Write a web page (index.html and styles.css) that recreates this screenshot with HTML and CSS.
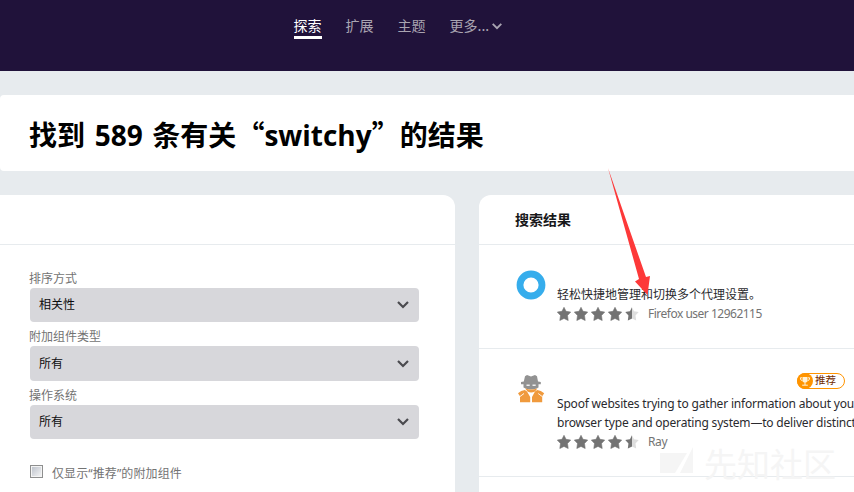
FILE: index.html
```html
<!DOCTYPE html>
<html lang="zh-CN">
<head>
<meta charset="utf-8">
<title>搜索结果</title>
<link rel="stylesheet" href="styles.css">
</head>
<body>
<svg width="0" height="0" class="defs">
  <defs>
    <path id="star" d="M7 .3 9 4.3 13.7 5.1 10.5 8.5 11.2 13.5 7 11.4 2.8 13.5 3.5 8.5 .3 5.1 5 4.3Z" stroke-width=".6" stroke-linejoin="round"/>
    <clipPath id="left-half"><rect width="7" height="14"/></clipPath>
    <symbol id="rating" viewBox="0 0 82 14">
      <g fill="#737373" stroke="#737373"><use href="#star"/><use href="#star" x="17"/><use href="#star" x="34"/><use href="#star" x="51"/></g>
      <g transform="translate(68)"><use href="#star" fill="#dedede"/><use href="#star" fill="#737373" clip-path="url(#left-half)"/></g>
    </symbol>
    <symbol id="chevron" viewBox="0 0 14 10"><path d="M2 2l5 5 5-5" fill="none" stroke="currentColor" stroke-width="2.2"/></symbol>
  </defs>
</svg>
<header class="header">
  <nav class="nav">
    <a class="nav-link active"><span>探索</span></a>
    <a class="nav-link">扩展</a>
    <a class="nav-link">主题</a>
    <a class="nav-link">更多...<svg class="nav-arrow"><use href="#chevron"/></svg></a>
  </nav>
</header>
<main class="page">
  <section class="title-card"><h1>找到 <span class="latin count">589</span> 条有关<span class="quote open">“</span><span class="latin">switchy</span><span class="quote close">”</span>的结果</h1></section>
  <div class="columns">
    <section class="card filters">
      <div class="card-head"></div>
      <form class="filter-body">
        <label>排序方式</label>
        <div class="select">相关性<svg><use href="#chevron"/></svg></div>
        <label>附加组件类型</label>
        <div class="select tall">所有<svg><use href="#chevron"/></svg></div>
        <label>操作系统</label>
        <div class="select">所有<svg><use href="#chevron"/></svg></div>
        <div class="check"><span class="box"></span><span>仅显示<i>“</i>推荐<i>”</i>的附加组件</span></div>
      </form>
    </section>
    <section class="card results">
      <div class="card-head">搜索结果</div>
      <article class="result first">
        <svg class="icon" viewBox="0 0 32 32"><circle cx="16" cy="16" r="11" fill="none" stroke="#36adec" stroke-width="6.8"/></svg>
        <div class="info">
          <p class="summary zh">轻松快捷地管理和切换多个代理设置。</p>
          <div class="meta"><svg class="stars"><use href="#rating"/></svg><span class="author user">Firefox user 12962115</span></div>
        </div>
      </article>
      <article class="result second">
        <svg class="icon" viewBox="0 0 32 32">
          <path fill="#929292" d="M10 3.2 12 2l4 1.4L20 2l2 1.2 1 5.3 2.8.5v2.2H6V9l2.8-.5Z"/>
          <path fill="#929292" d="M8.5 10.5h15v4q-3 2-7.5 2t-7.5-2Z"/>
          <path fill="#f09a3d" d="M10 15.2q6 2.5 12.5 0L20 18.4q-4 2-7.5 0Z"/>
          <path fill="#f09a3d" d="M9.8 17 12 18.5l3.2 5.5v5.2H5v-6l-2-3Q6 17.500 9.8 17ZM22.200 17 20 18.500 17 24v5.200h10.200v-6l2-3Q26 17.500 22.200 17Z"/>
          <path stroke="#eee" stroke-width="1.4" d="M11.500 12.300h3.200M17.500 12.300h3.200"/>
          <path d="M5 23.500 9 20.500M27.200 23.500l-4-3" stroke="#fff" stroke-width=".9"/>
        </svg>
        <div class="info">
          <div class="badge-row"><span class="badge"><svg viewBox="0 0 16 16"><circle cx="8" cy="8" r="8" fill="#ff9400"/><path d="M5.500 4h5v4Q10 9.500 8 9.500T5.500 8Z" fill="#fff2d8"/><path d="M8 9v3M5.200 12.200h5.600M5 4.800H3.300q0 2.700 2.200 3M11 4.800h1.700q0 2.700-2.200 3" fill="none" stroke="#fff2d8"/></svg>推荐</span></div>
          <p class="summary en"><span class="line one">Spoof websites trying to gather information about you</span><span class="line two">browser type and operating system—to deliver distinct</span></p>
          <div class="meta"><svg class="stars"><use href="#rating"/></svg><span class="author">Ray</span></div>
        </div>
      </article>
    </section>
  </div>
</main>
<div class="watermark"><svg viewBox="0 0 34 22"><path d="M0 1h27L15 21H0ZM33 -5v26H20Z" fill="#f5f5f5"/></svg><span>先知社区</span></div>
<svg class="pointer" viewBox="0 0 50 130"><path d="M3 1 41 110 45 109 42.500 128 30 114.500 34 112Z" fill="#fd3939"/></svg>
</body>
</html>
```
FILE: styles.css
```css
* { box-sizing: border-box; }
body {
  margin: 0;
  width: 854px;
  height: 492px;
  overflow: hidden;
  background: #e7ebee;
  font: 12px/18px "Noto Sans", "Noto Sans CJK SC", sans-serif;
  color: #2a2a2e;
}
.defs { position: absolute; }
.header { height: 71px; padding: 15px 0 0 293.5px; background: #20123a; }
.nav { display: flex; gap: 24px; }
.nav-link {
  height: 24px;
  color: #a9a4b1;
  font: 14px/20px "Noto Sans CJK SC", sans-serif;
  white-space: nowrap;
}
.active { color: #fff; border-bottom: 3px solid #fff; }
.nav-arrow { width: 12px; height: 9px; margin-left: 2px; }
.page { padding-top: 24px; }
.title-card { height: 76px; padding-left: 29px; background: #fff; border-radius: 4px 0 0 4px; }
h1 {
  margin: 0;
  font: bold 28px/78px "Noto Sans CJK SC", sans-serif;
  color: #000;
  white-space: nowrap;
  word-spacing: 3.3px;
}
.latin { font-family: "Open Sans", sans-serif; }
.quote { display: inline-block; width: 28px; }
.open { text-align: right; }
.columns { display: flex; gap: 24px; margin-top: 24px; height: 320px; }
.card { background: #fff; }
.filters { width: 455px; border-radius: 0 12px 0 0; }
.results { flex: 1; border-radius: 12px 0 0; min-width: 0; overflow: hidden; }
.card-head {
  height: 50px;
  padding-left: 36px;
  border-bottom: 1px solid #e7ebee;
  font: bold 14px/48px "Noto Sans CJK SC", sans-serif;
  color: #18181a;
}
.filter-body { padding: 25px 36px 0 30px; }
label { display: block; height: 18px; margin-left: -1px; line-height: 18px; color: #737373; }
.select {
  display: flex;
  align-items: center;
  justify-content: space-between;
  height: 34px;
  margin-bottom: 6px;
  padding: 0 9px;
  border-radius: 4px;
  background: #d7d7db;
  color: #0c0c0d;
}
.tall { height: 35px; }
.select svg { width: 14px; height: 10px; color: #4a4a4f; }
.check { display: flex; gap: 9px; padding-top: 20px; color: #737373; letter-spacing: .1px; }
.check i { font-style: normal; font-family: "Noto Sans", sans-serif; }
.box {
  width: 13px;
  height: 13px;
  border: 1px solid #8e8f8f;
  background: linear-gradient(135deg, #b9bfc9, #f7f7f7);
  box-shadow: inset 0 0 0 1px #f4f4f4;
}
.result { display: flex; padding-left: 36px; border-bottom: 1px solid #e7ebee; }
.icon { flex: none; width: 32px; height: 32px; }
.info { margin-left: 10px; white-space: nowrap; }
.summary { margin: 0; }
.first { height: 104px; padding-top: 24px; }
.first .info { padding-top: 17px; }
.second { height: 128px; padding-top: 24px; }
.badge-row { display: flex; height: 21px; padding-left: 240px; }
.badge {
  display: flex;
  gap: 2px;
  width: 48px;
  height: 16px;
  border: 1px solid #ff9400;
  border-radius: 8px;
  font-size: 10.5px;
  line-height: 13px;
  color: #712b00;
}
.badge svg { width: 16px; height: 16px; margin: -1px 0 0 -1px; }
.line { display: block; height: 19px; line-height: 19px; letter-spacing: -.19px; }
.meta { display: flex; height: 19px; line-height: 19px; }
.stars { width: 82px; height: 14px; margin-top: 3px; }
.author { margin-left: 9px; color: #737373; letter-spacing: -.4px; }
.user { letter-spacing: -.5px; }
.watermark {
  position: absolute;
  left: 660px;
  top: 449px;
  display: flex;
  align-items: center;
  gap: 10px;
  height: 28px;
  font: 33px/28px "Noto Sans CJK SC", sans-serif;
  color: #f5f5f5;
}
.watermark svg { width: 34px; height: 22px; overflow: visible; }
.pointer { position: absolute; left: 605px; top: 167px; width: 50px; height: 130px; }
```
